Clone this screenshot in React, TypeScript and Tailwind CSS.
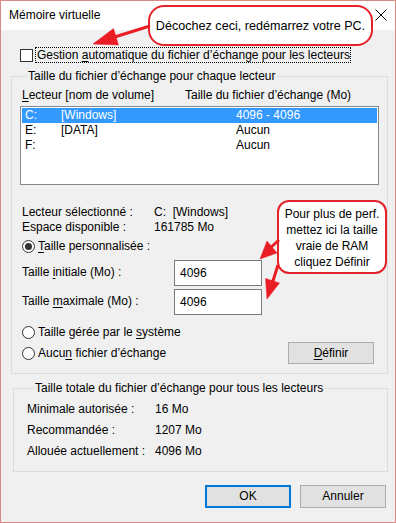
import React from "react";

const U = ({ children }: { children: React.ReactNode }) => (
  <span className="underline underline-offset-[2px] decoration-[1px]">{children}</span>
);

const Radio = ({ checked }: { checked?: boolean }) => (
  <span className="w-[13px] h-[13px] rounded-full border border-[#333333] bg-white flex items-center justify-center shrink-0">
    {checked && <span className="w-[7px] h-[7px] rounded-full bg-[#333333]" />}
  </span>
);

const Btn = ({ children, def, className = "" }: { children: React.ReactNode; def?: boolean; className?: string }) => (
  <div
    className={
      "flex items-center justify-center bg-[#e1e1e1] " +
      (def ? "border-2 border-[#0078d7] " : "border border-[#adadad] ") +
      className
    }
  >
    {children}
  </div>
);

const rows = [
  { d: "C:", v: "[Windows]", s: "4096 - 4096", sel: true },
  { d: "E:", v: "[DATA]", s: "Aucun" },
  { d: "F:", v: "", s: "Aucun" },
];

export default function App() {
  return (
    <div className="relative w-[396px] h-[523px] border border-[#d98a82] bg-[#f0f0f0] text-black text-[12px] leading-[15px] font-['Liberation_Sans',Arial,sans-serif] overflow-hidden">
      {/* title bar */}
      <div className="h-[29px] bg-white flex items-center justify-between pl-[8px] pr-[8px]">
        <span>Mémoire virtuelle</span>
        <svg width="12" height="12" viewBox="0 0 12 12" className="mt-[-1px]">
          <path d="M0.5 0.5 L11.5 11.5 M11.5 0.5 L0.5 11.5" stroke="#000" strokeWidth="1" />
        </svg>
      </div>

      <div className="pl-[10px] pr-[7px]">
        {/* checkbox row */}
        <div className="mt-[17px] pl-[9px] flex items-center gap-[2px] h-[16px]">
          <span className="w-[13px] h-[13px] border border-[#333333] bg-white shrink-0" />
          <span className="block border border-dotted border-black h-[16px] px-[1px] leading-[14px] whitespace-nowrap w-[316px]">
            Gestion <U>a</U>utomatique du fichier d’échange pour les lecteurs
          </span>
        </div>

        {/* group 1 */}
        <fieldset className="mt-[5px] border border-[#dcdcdc] pl-[8px] pr-[8px] pt-[4px] pb-[9px]">
          <legend className="ml-[7px] px-[1px] leading-[16px]">Taille du fichier d’échange pour chaque lecteur</legend>
          <div className="flex h-[14px] items-center pl-[2px]">
            <span className="w-[163px]">
              <U>L</U>ecteur [nom de volume]
            </span>
            <span>Taille du fichier d’échange (Mo)</span>
          </div>
          <div className="mt-[4px] h-[79px] border border-[#828790] bg-white p-[1px]">
            {rows.map((r) => (
              <div
                key={r.d}
                className={"flex h-[15px] items-center pl-[3px] " + (r.sel ? "bg-[#3399ff] text-white" : "")}
              >
                <span className="w-[36px]">{r.d}</span>
                <span className="w-[175px]">{r.v}</span>
                <span>{r.s}</span>
              </div>
            ))}
          </div>

          <div className="mt-[20px] pl-[2px]">
            <div className="flex h-[15px] items-center">
              <span className="w-[132px]">Lecteur sélectionné :</span>
              <span>C:&nbsp;&nbsp;[Windows]</span>
            </div>
            <div className="flex h-[15px] items-center">
              <span className="w-[132px]">Espace disponible :</span>
              <span>161785 Mo</span>
            </div>
            <div className="mt-[4px] flex h-[15px] items-center gap-[3px]">
              <Radio checked />
              <span>
                <U>T</U>aille personnalisée :
              </span>
            </div>
            <div className="mt-[6px] flex items-center h-[26px]">
              <span className="w-[152px] mt-[-2px]">
                Taille <U>i</U>nitiale (Mo) :
              </span>
              <div className="w-[88px] h-[26px] border border-[#7a7a7a] bg-white pl-[5px] flex items-center">4096</div>
            </div>
            <div className="mt-[3px] flex items-center h-[26px]">
              <span className="w-[152px] mt-[-2px]">
                Taille <U>m</U>aximale (Mo) :
              </span>
              <div className="w-[88px] h-[26px] border border-[#7a7a7a] bg-white pl-[5px] flex items-center">4096</div>
            </div>
            <div className="mt-[10px] flex h-[15px] items-center gap-[3px]">
              <Radio />
              <span>
                Taille gérée par le <U>s</U>ystème
              </span>
            </div>
            <div className="mt-[2px] flex h-[22px] items-center justify-between">
              <div className="flex items-center gap-[3px]">
                <Radio />
                <span>
                  Aucu<U>n</U> fichier d’échange
                </span>
              </div>
              <Btn className="w-[86px] h-[22px] mr-[5px]">
                <span>
                  <U>D</U>éfinir
                </span>
              </Btn>
            </div>
          </div>
        </fieldset>

        {/* group 2 */}
        <fieldset className="mt-[6px] ml-[2px] border border-[#dcdcdc] pl-[13px] pr-[8px] pt-[6px] pb-[12px]">
          <legend className="ml-[7px] px-[1px] leading-[16px]">Taille totale du fichier d’échange pour tous les lecteurs</legend>
          <div className="flex flex-col gap-[6px]">
            <div className="flex h-[15px] items-center">
              <span className="w-[128px]">Minimale autorisée :</span>
              <span>16 Mo</span>
            </div>
            <div className="flex h-[15px] items-center">
              <span className="w-[128px]">Recommandée :</span>
              <span>1207 Mo</span>
            </div>
            <div className="flex h-[15px] items-center">
              <span className="w-[128px]">Allouée actuellement :</span>
              <span>4096 Mo</span>
            </div>
          </div>
        </fieldset>

        {/* buttons */}
        <div className="mt-[13px] flex justify-end gap-[9px] pr-[2px]">
          <Btn def className="w-[86px] h-[23px]">OK</Btn>
          <Btn className="w-[86px] h-[23px]">Annuler</Btn>
        </div>
      </div>

      {/* callouts overlay */}
      <div className="absolute left-[147px] top-[4px] w-[225px] h-[41px] rounded-[16px] border-2 border-[#e5232b] bg-white flex items-center justify-center text-[12.6px] pt-[2px]">
        Décochez ceci, redémarrez votre PC.
      </div>
      <div className="absolute left-[276px] top-[199px] w-[110px] h-[74px] rounded-[12px] border-2 border-[#e5232b] bg-white text-center leading-[16px] pt-[4px]">
        Pour plus de perf.
        <br />
        mettez ici la taille
        <br />
        vraie de RAM
        <br />
        cliquez Définir
      </div>
      <svg className="absolute left-0 top-0 pointer-events-none" width="396" height="523" viewBox="0 0 396 523">
        <g fill="#ea1d25" stroke="#ea1d25">
          <line x1="149" y1="25" x2="112" y2="36.5" strokeWidth="3" />
          <polygon points="92,43 117.5,44 112.5,27.5" strokeWidth="0.5" />
          <line x1="278" y1="239" x2="268" y2="248" strokeWidth="3" />
          <polygon points="259,258 276,252 266,240" strokeWidth="0.5" />
          <line x1="277" y1="264" x2="271" y2="283" strokeWidth="3" />
          <polygon points="266,298 278.5,282 264.5,277.5" strokeWidth="0.5" />
        </g>
      </svg>
    </div>
  );
}
